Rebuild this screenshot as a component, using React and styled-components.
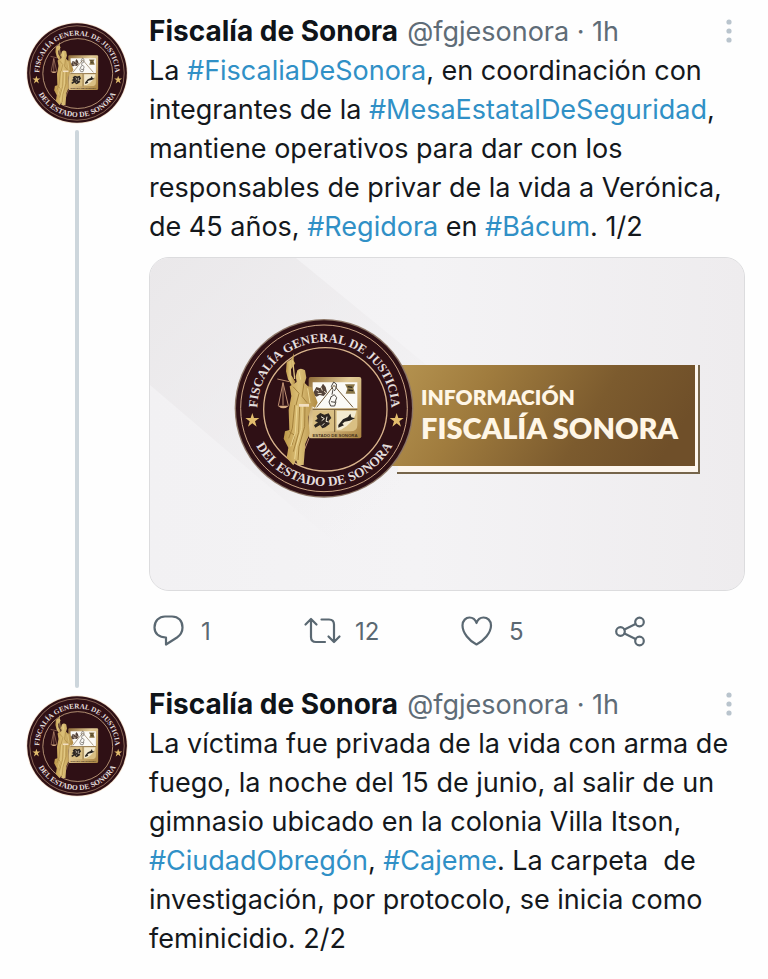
import React, { useId } from "react";
import styled, { createGlobalStyle } from "styled-components";

const GlobalStyle = createGlobalStyle`
  body {
    margin: 0;
    background: #fefefe;
    color: #14181c;
    font-family: Inter, "Liberation Sans", sans-serif;
    font-size: 27px;
    line-height: 39px;
  }
`;

const Thread = styled.main`
  padding: 15px 23px 20px 26px;
`;

const Tweet = styled.article`
  display: grid;
  grid-template-columns: 102px minmax(0, 1fr);
  column-gap: 21px;
`;

const AvatarColumn = styled.div`
  display: flex;
  flex-direction: column;
  align-items: center;
  gap: 6px;
  padding-top: 7px;
`;

const Avatar = styled.a`
  display: block;
  width: 102px;
  height: 102px;
  border-radius: 50%;

  > svg {
    display: block;
    width: 100%;
    height: 100%;
  }
`;

const ThreadLine = styled.div`
  flex: 1;
  width: 4px;
  border-radius: 2px;
  background: #cdd6dc;
`;

const Header = styled.header`
  display: flex;
  align-items: center;
  gap: 9px;
  height: 33px;
  margin-bottom: 3px;
  white-space: nowrap;
`;

const Name = styled.a`
  color: #0f1419;
  font-size: 28px;
  font-weight: 700;
  text-decoration: none;
`;

const Meta = styled.span`
  flex: 1;
  color: #5f6c77;
`;

const MoreButton = styled.button`
  display: flex;
  justify-content: center;
  width: 32px;
  height: 32px;
  padding: 0;
  border: 0;
  background: none;
  color: #b9c4cd;
  cursor: pointer;
`;

const Body = styled.p`
  margin: 0;
  white-space: pre-wrap;
`;

const Hashtag = styled.a`
  color: #3090c6;
  text-decoration: none;
`;

const Media = styled.figure`
  margin: 11px 0 0;
  overflow: hidden;
  border: 1px solid #dcdcde;
  border-radius: 20px;
  background: #f1f0f2;

  > svg {
    display: block;
    width: 100%;
    height: auto;
  }
`;

const Actions = styled.div`
  display: grid;
  grid-template-columns: 1fr 1fr 1fr 134px;
  padding: 20px 0 37px;
`;

const Action = styled.button`
  display: flex;
  align-items: center;
  gap: 12px;
  height: 40px;
  padding: 0;
  border: 0;
  background: none;
  color: #5a6872;
  font: inherit;
  font-size: 24px;
  cursor: pointer;
`;

const icons = {
  reply: (
    <path d="M16 5.500H23C29.500 5.500 33.500 10 33.500 16.500C33.500 20.500 31.500 24 28 26.500L17 33.500V26.500C10 26.500 5.500 22.500 5.500 16.500C5.500 10 10 5.500 16 5.500Z" />
  ),
  retweet: (
    <path d="M2.500 13.500 8 8 13.500 13.500M8 8.500V26Q8 31 13 31H22M18.500 8.500H26Q31 8.500 31 13.500V30.500M25.500 25.500 31 31 36.500 25.500" />
  ),
  like: (
    <path d="M19.500 33.500C12.500 30 5.500 22 5.500 14.500C5.500 9.500 9 6.500 12.500 6.500C16 6.500 18.500 9 19.500 12C20.500 9 23 6.500 26.500 6.500C30.500 6.500 34 9.500 34 14.500C34 22 26.500 30 19.500 33.500Z" />
  ),
  share: (
    <>
      <circle cx="9.500" cy="20.500" r="4.300" />
      <circle cx="28.500" cy="11" r="4.300" />
      <circle cx="28.500" cy="30" r="4.300" />
      <path d="m13.500 18.500 11-5.500M13.500 22.500l11 5.500" />
    </>
  ),
};

function ActionButton({ icon, label, count }) {
  return (
    <Action type="button" aria-label={count ? `${label}: ${count}` : label}>
      <svg
        width="40"
        height="40"
        viewBox="0 0 40 40"
        fill="none"
        stroke="currentColor"
        strokeWidth="2.200"
        strokeLinejoin="round"
        strokeLinecap="round"
        aria-hidden="true"
      >
        {icons[icon]}
      </svg>
      {count && <span>{count}</span>}
    </Action>
  );
}

const STAR =
  "M0-22 5-7 21-7 8 3 13 19 0 9-13 19-8 3-21-7-5-7Z";

function SealArt({ halo }) {
  const id = useId();
  const top = `${id}-top`;
  const bottom = `${id}-bottom`;
  const gold = `${id}-gold`;
  const plate = `${id}-plate`;
  return (
    <>
      <defs>
        <path id={top} d="M97 297A201 201 0 0 1 499 297" />
        <path id={bottom} d="M65 295A233 233 0 0 0 531 295" />
        <linearGradient id={gold} x1="0" x2="1">
          <stop offset="0" stopColor="#bd9748" />
          <stop offset=".450" stopColor="#dcc078" />
          <stop offset="1" stopColor="#b08a42" />
        </linearGradient>
        <linearGradient id={plate} x1="0" y1="0" x2="1" y2="1">
          <stop offset="0" stopColor="#8d6a37" />
          <stop offset=".400" stopColor="#e3cc98" />
          <stop offset="1" stopColor="#a9823f" />
        </linearGradient>
      </defs>
      <circle cx="297" cy="295" r="268" fill={halo} />
      <circle cx="297" cy="295" r="264" fill="#2f1015" />
      <circle cx="297" cy="295" r="250" fill="none" stroke="#cda687" strokeWidth="3" />
      <circle cx="301" cy="298" r="185" fill="none" stroke="#d9b48d" strokeWidth="4" />
      <g
        fill="#e4dedd"
        fontFamily="'Liberation Serif', serif"
        fontSize="38"
        fontWeight="700"
        textAnchor="middle"
      >
        <text>
          <textPath href={`#${top}`} startOffset="50%">
            FISCALÍA GENERAL DE JUSTICIA
          </textPath>
        </text>
        <text fontSize="40">
          <textPath href={`#${bottom}`} startOffset="50%">
            DEL ESTADO DE SONORA
          </textPath>
        </text>
      </g>
      <path d={STAR} fill="#e3bd6d" transform="translate(82 331)" />
      <path d={STAR} fill="#e3bd6d" transform="translate(515 331)" />

      <rect x="251" y="201" width="158" height="184" rx="6" fill={`url(#${plate})`} />
      <path d="M263 217H397V295H263Z" fill="#fbfaf6" />
      <path d="M263 302H327V364H284Q263 364 263 346ZM332 302H397V346Q397 364 376 364H332Z" fill="#d9bf83" />
      <path d="M335 302H394Q390 336 348 359H335Z" fill="#f3ead0" />
      <path d="M275 292 327 226 384 292M263 298H397M329 299V366" fill="none" stroke="#6f5837" strokeWidth="3" />
      <path d="m266 246 8-15 12 4 8-14 8 10 4 16-10 11-12-3-9 5-10-5Z" fill="#54433a" />
      <path d="m274 240 8 4m6-12 4 10m-14 8 12 1m8-8 4 6" fill="none" stroke="#e9ddc8" strokeWidth="3" />
      <path d="M360 223h30l-5 11 6 17h-29l5-15Z" fill="#8a7647" />
      <path d="m368 230 14 2m-12 8 14 2" fill="none" stroke="#2f2a1f" strokeWidth="4" />
      <path
        d="m316 262 12-8 7 9-5 14-12-2m0-13-6 14 5 12h12l4-13m-12-21 3-16-5-9 7-13 8 6v11l-6 10"
        fill="none"
        stroke="#4a4540"
        strokeWidth="3"
        strokeLinejoin="round"
      />
      <path d="m274 318 12-9 12 5 13-4 8 14-8 8 3 10-13 10-9 3-7-10-14 8-4-7 12-9-10-4 9-7Z" fill="#2d2722" />
      <path d="m288 320 10 6-8 6m16-12-3 14 8 2m-13 4-7 7" fill="none" stroke="#f4ecd9" strokeWidth="3" />
      <path d="M340 345 354 328 369 321 376 311 379 322 390 325 374 332 359 335 352 341 357 346 340 353Z" fill="#27231f" />
      <text x="330" y="380" fill="#49351d" fontFamily="'Liberation Sans', sans-serif" fontSize="13" fontWeight="700" textAnchor="middle">
        ESTADO DE SONORA
      </text>

      <g fill="none" stroke="#bd8e72" strokeWidth="3">
        <path d="M174 218V286M174 218 160 287M174 218 190 287M157 207 193 215M252 385 220 465" />
      </g>
      <path d="M158 287H192Q175 303 158 287Z" fill="#d7ab83" />
      <g fill={`url(#${gold})`}>
        <path d="M207 129 199 148 185 156 183 184 189 208 202 229 211 215 199 196 198 178 211 160 206 152Z" />
        <path d="M217 181Q227 172 240 181L244 203 239 219 249 229 260 232 270 256 278 278 270 294 260 288 250 321 254 371 241 401 236 465H218L213 451 205 466 185 443 190 413 176 386 180 364 193 360 191 300 199 258 194 229 215 216 212 199Z" />
      </g>
      <path d="M203 151 209 207" stroke="#e0c47e" strokeWidth="4" />
      <g fill="none" stroke="#a5823c" strokeWidth="3">
        <path d="M204 230 222 250 213 285M237 220 231 259 246 278M209 285 202 355 191 385M224 283 221 367 205 425M240 283 239 350 222 410 219 450M193 365 209 376 201 405" />
      </g>
      <g fill="none" stroke="#ecd693" strokeWidth="3">
        <path d="M216 288 211 368 197 409M232 283 230 355 214 410 209 447M222 184 227 209M248 235 255 279" />
      </g>
      <path d="M222 286H252" stroke="#f1dec1" strokeWidth="8" />
    </>
  );
}

function BannerPicture() {
  const id = useId();
  const bg = `${id}-bg`;
  const bar = `${id}-bar`;
  const ray = `${id}-ray`;
  return (
    <svg viewBox="0 0 594 332" role="img" aria-label="Información Fiscalía Sonora">
      <defs>
        <linearGradient id={bg} x1="0" y1="0" x2="1" y2="0">
          <stop offset="0" stopColor="#f2f1f3" />
          <stop offset=".450" stopColor="#f4f3f5" />
          <stop offset="1" stopColor="#eeecee" />
        </linearGradient>
        <linearGradient id={ray} gradientUnits="userSpaceOnUse" x1="0" y1="0" x2="240" y2="240">
          <stop offset="0" stopColor="#eae8ea" />
          <stop offset="1" stopColor="#eae8ea" stopOpacity="0" />
        </linearGradient>
        <linearGradient id={bar} x1="0" y1=".200" x2="1" y2=".400">
          <stop offset="0" stopColor="#b59350" />
          <stop offset=".300" stopColor="#a07c3e" />
          <stop offset=".700" stopColor="#7c5b2e" />
          <stop offset="1" stopColor="#6f4f29" />
        </linearGradient>
      </defs>
      <rect width="594" height="332" fill={`url(#${bg})`} />
      <path d="M0 0H146L290 118V332H240L0 127Z" fill={`url(#${ray})`} />
      <path d="M250 107H550V216H248Z" fill="#fdf6ee" />
      <rect x="235" y="107" width="310" height="101" fill={`url(#${bar})`} />
      <path d="M549 107V215H247" fill="none" stroke="#76654b" strokeWidth="2" />
      <svg x="75" y="52" width="200" height="200" viewBox="0 0 600 600">
        <SealArt halo="#8d7768" />
      </svg>
      <g fill="#fff6e6" fontFamily="Lato, sans-serif">
        <text x="271" y="147" fontSize="21" fontWeight="800">INFORMACIÓN</text>
        <text x="271" y="181" fontSize="29" fontWeight="800">FISCALÍA SONORA</text>
      </g>
    </svg>
  );
}

function TweetItem({ connected, children }) {
  return (
    <Tweet>
      <AvatarColumn>
        <Avatar href="#perfil" aria-label="Fiscalía de Sonora">
          <svg viewBox="27 25 540 540" aria-hidden="true">
            <SealArt halo="#f3e0cc" />
          </svg>
        </Avatar>
        {connected && <ThreadLine />}
      </AvatarColumn>
      <div>
        <Header>
          <Name href="#perfil">Fiscalía de Sonora</Name>
          <Meta>@fgjesonora · 1h</Meta>
          <MoreButton type="button" aria-label="Más opciones">
            <svg width="32" height="32" viewBox="0 0 32 32" fill="currentColor" aria-hidden="true">
              <circle cx="16" cy="6" r="2.600" />
              <circle cx="16" cy="15" r="2.600" />
              <circle cx="16" cy="24" r="2.600" />
            </svg>
          </MoreButton>
        </Header>
        {children}
      </div>
    </Tweet>
  );
}

const Tag = ({ name }) => <Hashtag href={`#${name}`}>{`#${name}`}</Hashtag>;

export default function App() {
  return (
    <>
      <GlobalStyle />
      <Thread>
        <TweetItem connected>
          <Body>
            La <Tag name="FiscaliaDeSonora" />, en coordinación con integrantes de la{" "}
            <Tag name="MesaEstatalDeSeguridad" />, mantiene operativos para dar con los
            {" "}responsables de privar de la vida a Verónica, de 45 años,{" "}
            <Tag name="Regidora" /> en <Tag name="Bácum" />. 1/2
          </Body>
          <Media>
            <BannerPicture />
          </Media>
          <Actions>
            <ActionButton icon="reply" label="Responder" count="1" />
            <ActionButton icon="retweet" label="Retwittear" count="12" />
            <ActionButton icon="like" label="Me gusta" count="5" />
            <ActionButton icon="share" label="Compartir" />
          </Actions>
        </TweetItem>
        <TweetItem>
          <Body>
            La víctima fue privada de la vida con arma de fuego, la noche del 15 de junio, al
            {" "}salir de un gimnasio ubicado en la colonia Villa Itson,{" "}
            <Tag name="CiudadObregón" />, <Tag name="Cajeme" />. La carpeta{"  "}de
            {" "}investigación, por protocolo, se inicia como feminicidio. 2/2
          </Body>
        </TweetItem>
      </Thread>
    </>
  );
}
